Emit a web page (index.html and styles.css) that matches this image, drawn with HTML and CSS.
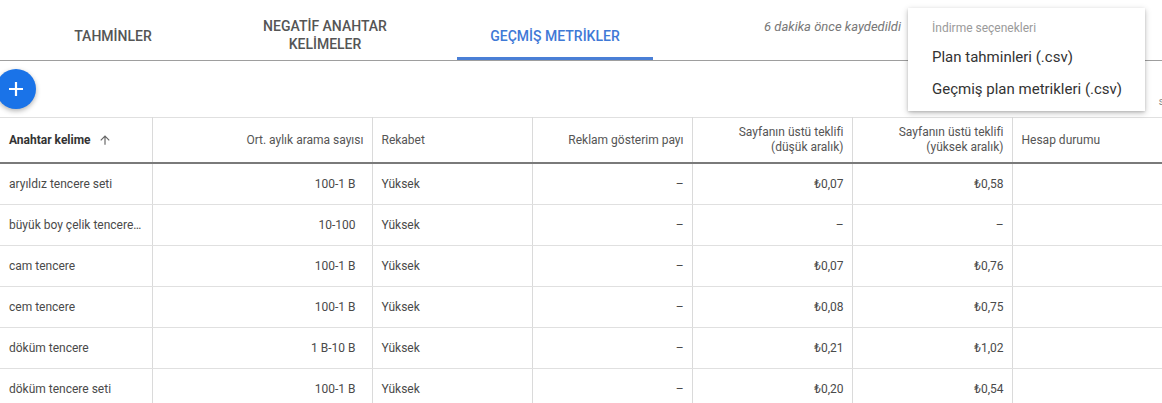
FILE: index.html
```html
<!DOCTYPE html>
<html lang="tr">
<head>
  <meta charset="UTF-8" />
  <meta name="viewport" content="width=device-width, initial-scale=1.0"/>
  <title>Anahtar Kelime Planlayıcı</title>
  <link rel="stylesheet" href="styles.css">
</head>
<body>
  <div class="tabbar">
    <div class="tab tab-1">TAHMİNLER</div>
    <div class="tab tab-2">NEGATİF ANAHTAR<br>KELİMELER</div>
    <div class="tab tab-3 active">GEÇMİŞ METRİKLER</div>
    <div class="saved">6 dakika önce kaydedildi</div>
  </div>

  <div class="toolbar">
    <button class="fab">
      <svg width="18" height="18" viewBox="0 0 18 18"><path d="M9 2v14M2 9h14" stroke="#fff" stroke-width="2.2" fill="none"/></svg>
    </button>
    <span class="cut-label">s</span>
  </div>

  <div class="menu">
    <div class="menu-title">İndirme seçenekleri</div>
    <div class="menu-item">Plan tahminleri (.csv)</div>
    <div class="menu-item">Geçmiş plan metrikleri (.csv)</div>
  </div>

  <table class="grid">
    <colgroup>
      <col style="width:152px">
      <col style="width:220px">
      <col style="width:160px">
      <col style="width:160px">
      <col style="width:160px">
      <col style="width:160px">
      <col style="width:150px">
    </colgroup>
    <thead>
      <tr>
        <th class="left key">Anahtar kelime
          <svg class="sort" width="14" height="14" viewBox="0 0 24 24"><path d="M4 12l1.41 1.41L11 7.83V20h2V7.83l5.58 5.59L20 12l-8-8-8 8z" fill="#666"/></svg>
        </th>
        <th>Ort. aylık arama sayısı</th>
        <th class="left">Rekabet</th>
        <th>Reklam gösterim payı</th>
        <th>Sayfanın üstü teklifi<br>(düşük aralık)</th>
        <th>Sayfanın üstü teklifi<br>(yüksek aralık)</th>
        <th class="left">Hesap durumu</th>
      </tr>
    </thead>
    <tbody>
      <tr><td class="left">aryıldız tencere seti</td><td class="searches">100-1 B</td><td class="left">Yüksek</td><td>–</td><td>₺0,07</td><td>₺0,58</td><td></td></tr>
      <tr><td class="left">büyük boy çelik tencere…</td><td class="searches">10-100</td><td class="left">Yüksek</td><td>–</td><td>–</td><td>–</td><td></td></tr>
      <tr><td class="left">cam tencere</td><td class="searches">100-1 B</td><td class="left">Yüksek</td><td>–</td><td>₺0,07</td><td>₺0,76</td><td></td></tr>
      <tr><td class="left">cem tencere</td><td class="searches">100-1 B</td><td class="left">Yüksek</td><td>–</td><td>₺0,08</td><td>₺0,75</td><td></td></tr>
      <tr><td class="left">döküm tencere</td><td class="searches">1 B-10 B</td><td class="left">Yüksek</td><td>–</td><td>₺0,21</td><td>₺1,02</td><td></td></tr>
      <tr><td class="left">döküm tencere seti</td><td class="searches">100-1 B</td><td class="left">Yüksek</td><td>–</td><td>₺0,20</td><td>₺0,54</td><td></td></tr>
    </tbody>
  </table>
</body>
</html>
```

FILE: styles.css
```css
body {
  margin: 0;
  padding: 0;
  overflow: hidden;
  font-family: Roboto, "DejaVu Sans", sans-serif;
  background: #fff;
  color: #3c3c3c;
}

.tabbar {
  display: flex;
  align-items: stretch;
  height: 60px;
  border-bottom: 1px solid #9e9e9e;
}

.tab {
  display: flex;
  align-items: center;
  justify-content: center;
  text-align: center;
  font-size: 14px;
  font-weight: 500;
  line-height: 18px;
  color: #555;
  box-sizing: border-box;
  padding-top: 12px;
}

.tab-1 { width: 226px; }
.tab-2 { width: 198px; margin-right: 33px; padding-top: 9px; }
.tab-3 { width: 196px; }

.tab.active {
  color: #3f79d6;
  border-bottom: 3px solid #4a7fd6;
  padding-top: 15px;
}

.saved {
  margin-left: 111px;
  padding-top: 19px;
  font-size: 13px;
  font-style: italic;
  color: #777;
}

.toolbar {
  display: flex;
  justify-content: space-between;
  align-items: center;
  height: 56px;
}

.fab {
  width: 40px;
  height: 40px;
  margin-left: -4px;
  border: none;
  border-radius: 50%;
  background: #1a73e8;
  box-shadow: 0 2px 5px rgba(0, 0, 0, 0.3);
  display: flex;
  align-items: center;
  justify-content: center;
  padding: 0;
}

.cut-label {
  align-self: flex-end;
  margin-bottom: 10px;
  margin-right: -2px;
  font-size: 10px;
  color: #888;
}

.menu {
  position: absolute;
  top: 8px;
  left: 908px;
  width: 237px;
  height: 103px;
  background: #fff;
  box-shadow: 0 2px 6px rgba(0, 0, 0, 0.25), 0 1px 2px rgba(0, 0, 0, 0.12);
  padding: 13px 0 0 24px;
  box-sizing: border-box;
}

.menu-title {
  font-size: 12px;
  color: #9a9a9a;
  height: 20px;
}

.menu-item {
  font-size: 15px;
  color: #333;
  height: 32px;
  line-height: 32px;
}

.grid {
  border-collapse: collapse;
  table-layout: fixed;
  width: 1162px;
  font-size: 12px;
  border-top: 1px solid #e0e0e0;
}

.grid th {
  height: 44px;
  padding: 0 8px;
  font-weight: 400;
  color: #555;
  text-align: right;
  line-height: 15px;
  border-right: 1px solid #dadada;
  border-bottom: 2px solid #7a7a7a;
}

.grid th.key {
  font-weight: 700;
  color: #333;
}

.sort {
  vertical-align: -3px;
  margin-left: 4px;
}

.grid td {
  height: 40px;
  padding: 0 8px;
  text-align: right;
  color: #4a4a4a;
  border-right: 1px solid #dadada;
  border-bottom: 1px solid #e0e0e0;
  white-space: nowrap;
  overflow: hidden;
}

.grid td.searches {
  padding-right: 16px;
}

.grid .left {
  text-align: left;
  padding-left: 9px;
}
```
